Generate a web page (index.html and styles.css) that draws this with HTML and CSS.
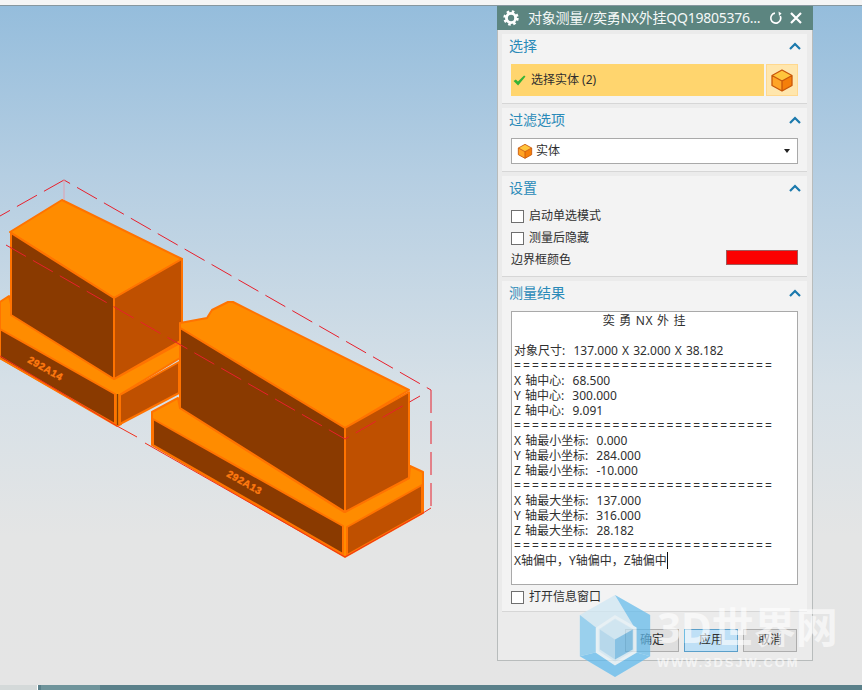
FILE: index.html
```html
<!DOCTYPE html>
<html lang="zh">
<head>
<meta charset="utf-8">
<title>对象测量</title>
<link rel="stylesheet" href="styles.css">
</head>
<body>
<svg class="defs" width="0" height="0" aria-hidden="true">
  <symbol id="cube" viewBox="0 0 24 24">
    <polygon points="12,2 22,7.5 12,13 2,7.5" fill="#ffc53c"/>
    <polygon points="2,7.5 12,13 12,23 2,17.5" fill="#ffa426"/>
    <polygon points="22,7.5 12,13 12,23 22,17.5" fill="#f57f0a"/>
    <path d="M12 2 22 7.5V17.5L12 23 2 17.5V7.5ZM2 7.5 12 13 22 7.5M12 13V23" fill="none" stroke="#c9570a" stroke-width="1.3" stroke-linejoin="round"/>
  </symbol>
  <symbol id="chev" viewBox="0 0 12 8">
    <path d="M1 7 6 2 11 7" fill="none" stroke="#1b79ad" stroke-width="2.2"/>
  </symbol>
</svg>

<div class="topbar"></div>

<main class="stage">
  <svg class="model" viewBox="0 6 862 679" xmlns="http://www.w3.org/2000/svg">
    <g stroke="#ff7300" stroke-width="2" stroke-linejoin="round">
      <!-- left block -->
      <polygon points="0,302 9,296 14,316 114,379 180,343 180,358 121,394 121,424 117,426 0,358" fill="#ff8c00"/>
      <polygon points="0,329 115,394 115,424 0,358" fill="#8a3a00"/>
      <polygon points="120,395 179,362 179,393 120,424" fill="#bf5000"/>
      <line x1="117.500" y1="394" x2="117.500" y2="425" stroke="#8a3a00" stroke-width="1.500"/>
      <polygon points="10,232 62,200 182,259 114,298" fill="#ff8c00"/>
      <polygon points="11,233 114,298 114,379 11,315" fill="#8a3a00"/>
      <polygon points="114,298 182,259 182,340 114,379" fill="#bf5000"/>
      <!-- right block -->
      <polygon points="152,412 178,398 180,408 344,512 409,478 410,466 423,472 423,513 345,557 152,445" fill="#ff8c00"/>
      <polygon points="153,419 343,526 343,554 153,445" fill="#8a3a00"/>
      <polygon points="347,527 422,485 422,513 347,555" fill="#bf5000"/>
      <polygon points="180,323 207,318 212,310 228,302 233,302 409,390 345,428 180,328" fill="#ff8c00"/>
      <polygon points="180,328 345,428 345,512 180,408" fill="#8a3a00"/>
      <polygon points="345,428 409,392 409,478 345,512" fill="#bf5000"/>
    </g>
    <text class="part-label" transform="translate(27 362) rotate(29.5)">292A14</text>
    <text class="part-label" transform="translate(226 476) rotate(29.5)">292A13</text>
    <g fill="none" stroke="#e8202c" stroke-width="1" stroke-dasharray="23 8">
      <path d="M64 180 0 216"/>
      <path d="M64 180 431 390" stroke-dashoffset="16"/>
      <path d="M431 390V508"/>
      <path d="M6 245 345 439 420 396"/>
    </g>
    <path d="M64 180V200" stroke="#e0a0b0" stroke-width="1"/>
    <path d="M0 356 117 426 137 437M145 443 345 557 423 513 431 508" fill="none" stroke="#f0301c" stroke-width="1"/>
  </svg>

  <section class="dialog">
    <header class="dlg-title">
      <svg class="gear" viewBox="0 0 16 16">
        <circle cx="8" cy="8" r="4.6" fill="none" stroke="#fff" stroke-width="2.8"/>
        <circle cx="8" cy="8" r="6.4" fill="none" stroke="#fff" stroke-width="2.6" stroke-dasharray="2.5 2.53"/>
      </svg>
      <span class="dlg-name">对象测量//奕勇NX外挂QQ19805376...</span>
      <svg class="dlg-btn" viewBox="0 0 14 14">
        <path d="M6 2.2A5 5 0 1 0 11.3 5" fill="none" stroke="#fff" stroke-width="1.7"/>
        <path d="M9 .6 12.4 2 10.4 5Z" fill="#fff" transform="rotate(12 10 3)"/>
      </svg>
      <svg class="dlg-btn" viewBox="0 0 14 14">
        <path d="M2 2 12 12M12 2 2 12" fill="none" stroke="#fff" stroke-width="2.2"/>
      </svg>
    </header>

    <div class="dlg-body">
      <div class="panel">
        <div class="panel-head"><span>选择</span><svg class="chev"><use href="#chev"/></svg></div>
        <div class="panel-main">
          <div class="sel-row">
            <div class="sel-field">
              <svg class="tick" viewBox="0 0 14 12"><path d="M.5 6.500 3 4.800 5.300 7.200 12 .5 13.500 1.500 5.500 11.500Z" fill="#36b236"/></svg>
              <span>选择实体 (2)</span>
            </div>
            <div class="sel-btn"><svg class="cube-lg"><use href="#cube"/></svg></div>
          </div>
        </div>
      </div>

      <div class="panel">
        <div class="panel-head"><span>过滤选项</span><svg class="chev"><use href="#chev"/></svg></div>
        <div class="panel-main">
          <div class="combo">
            <svg class="cube-sm"><use href="#cube"/></svg>
            <span class="combo-text">实体</span>
            <span class="combo-arrow"></span>
          </div>
        </div>
      </div>

      <div class="panel">
        <div class="panel-head"><span>设置</span><svg class="chev"><use href="#chev"/></svg></div>
        <div class="panel-main panel-main-rows">
          <label class="check-row"><span class="box"></span>启动单选模式</label>
          <label class="check-row"><span class="box"></span>测量后隐藏</label>
          <div class="color-row"><span>边界框颜色</span><span class="swatch"></span></div>
        </div>
      </div>

      <div class="panel">
        <div class="panel-head"><span>测量结果</span><svg class="chev"><use href="#chev"/></svg></div>
        <div class="panel-main panel-main-result">
          <div class="result">
            <div class="r-title">奕 勇 NX 外 挂</div>
            <div class="r-line">&nbsp;</div>
            <div class="r-line">对象尺寸:&nbsp; 137.000 X 32.000 X 38.182</div>
            <div class="r-line r-sep">=============================</div>
            <div class="r-line">X 轴中心:&nbsp; 68.500</div>
            <div class="r-line">Y 轴中心:&nbsp; 300.000</div>
            <div class="r-line">Z 轴中心:&nbsp; 9.091</div>
            <div class="r-line r-sep">=============================</div>
            <div class="r-line">X 轴最小坐标:&nbsp; 0.000</div>
            <div class="r-line">Y 轴最小坐标:&nbsp; 284.000</div>
            <div class="r-line">Z 轴最小坐标:&nbsp; -10.000</div>
            <div class="r-line r-sep">=============================</div>
            <div class="r-line">X 轴最大坐标:&nbsp; 137.000</div>
            <div class="r-line">Y 轴最大坐标:&nbsp; 316.000</div>
            <div class="r-line">Z 轴最大坐标:&nbsp; 28.182</div>
            <div class="r-line r-sep">=============================</div>
            <div class="r-line r-last"><span class="caret">X轴偏中，Y轴偏中，Z轴偏中</span></div>
          </div>
          <label class="check-row check-row-info"><span class="box"></span>打开信息窗口</label>
        </div>
      </div>

      <div class="dlg-foot">
        <button class="btn">确定</button>
        <button class="btn btn-primary">应用</button>
        <button class="btn">取消</button>
      </div>
    </div>
  </section>

  <div class="watermark">
    <svg class="wm-logo" viewBox="60 45 210 245">
      <polygon points="165,45 270,105 270,228 165,290 60,228 60,105" fill="#cfe7f4"/>
      <polygon points="165,45 270,105 270,228 225,215 225,145" fill="#63bbec"/>
      <polygon points="270,228 165,290 60,228 112,215 165,250 225,215" fill="#5dbaee"/>
      <polygon points="60,228 60,105 112,145 112,215" fill="#7cc6ee"/>
      <polygon points="165,110 225,145 225,215 165,250 112,215 112,145" fill="none" stroke="#e6f2f8" stroke-width="9"/>
      <polygon points="165,118 218,148 165,178 120,148" fill="#c6e3f3"/>
      <polygon points="120,148 165,178 165,238 120,208" fill="#a4d2ec"/>
      <polygon points="218,148 165,178 165,238 218,208" fill="#62b2e0"/>
    </svg>
    <div class="wm-text">
      <div class="wm-main">3D世界网</div>
      <div class="wm-sub">WWW.3DSJW.COM</div>
    </div>
  </div>
</main>

<footer class="taskbar">
  <span class="task task-a"></span>
  <span class="task task-b"></span>
</footer>
</body>
</html>
```

FILE: styles.css
```css
* { box-sizing: border-box; }

html, body {
  margin: 0;
  height: 100%;
  overflow: hidden;
}

body {
  display: flex;
  flex-direction: column;
  width: 862px;
  height: 690px;
  font: 12px/1.2 "Noto Sans", "Noto Sans CJK SC", sans-serif;
  color: #2f2f2f;
  background: #e5e5e5;
}

.defs { position: absolute; }

.topbar {
  flex: 0 0 6px;
  background: #f5f5f5;
  border-bottom: 1px solid #87979f;
}

.stage {
  position: relative;
  flex: 1;
  background: linear-gradient(#95bddc 0, #b5cee2 170px, #d6e0e7 380px, #e4e5e5 530px, #e5e5e5 100%);
}

.model {
  position: absolute;
  inset: 0;
  width: 100%;
  height: 100%;
}

.part-label {
  font: 700 10px "Liberation Sans", sans-serif;
  fill: #ff7a10;
  stroke: #ff7a10;
  stroke-width: .4px;
  letter-spacing: .6px;
}

.dialog {
  position: absolute;
  left: 497px;
  top: 0;
  width: 316px;
  height: 655px;
  display: flex;
  flex-direction: column;
  background: #ebebeb;
  border: 1px solid #b8bcbc;
  border-top: 0;
}

.dlg-title {
  display: flex;
  align-items: center;
  flex: 0 0 24px;
  margin: 0 -1px;
  padding: 0 10px 0 6px;
  background: #5c8580;
  color: #f4f8f7;
  font-size: 14px;
}

.gear { width: 16px; height: 16px; flex: none; }

.dlg-name {
  flex: 1;
  margin-left: 9px;
  letter-spacing: -.25px;
  white-space: nowrap;
}

.dlg-btn { width: 14px; height: 14px; margin-left: 6px; flex: none; }

.dlg-body {
  display: flex;
  flex-direction: column;
  gap: 4px;
  padding: 4px 5px 0 4px;
  flex: 1;
}

.panel {
  background: #f3f3f3;
  border-bottom: 1px solid #d6d6d6;
}

.panel-head {
  display: flex;
  align-items: center;
  justify-content: space-between;
  height: 24px;
  padding: 0 6px 0 7px;
  color: #2a8ab8;
  font-size: 14px;
}

.chev { width: 12px; height: 8px; }

.panel-main { padding: 6px 9px 7px; }
.panel-main-rows { padding: 5px 9px 5px; }
.panel-main-result { padding: 6px 9px 2px; }

.sel-row { display: flex; gap: 2px; height: 32px; }

.sel-field {
  display: flex;
  align-items: center;
  flex: 1;
  gap: 5px;
  padding-left: 2px;
  background: #ffd56e;
}

.tick { width: 13px; height: 11px; }

.sel-btn {
  display: flex;
  align-items: center;
  justify-content: center;
  width: 32px;
  background: #ffe6ad;
  border: 1px solid #ffd88e;
}

.cube-lg { width: 24px; height: 24px; }
.cube-sm { width: 16px; height: 16px; }

.combo {
  display: flex;
  align-items: center;
  height: 26px;
  padding: 0 7px 0 5px;
  background: #fff;
  border: 1px solid #a9a9a9;
}

.combo-text { flex: 1; margin-left: 3px; }

.combo-arrow {
  width: 0;
  height: 0;
  border: 3.5px solid transparent;
  border-top: 4px solid #222;
  border-bottom: 0;
}

.check-row {
  display: flex;
  align-items: center;
  gap: 5px;
  height: 22px;
}

.check-row-info { height: 24px; }

.box {
  width: 13px;
  height: 13px;
  background: #fff;
  border: 1px solid #6f6f6f;
}

.color-row {
  display: flex;
  align-items: center;
  justify-content: space-between;
  height: 22px;
}

.swatch {
  width: 72px;
  height: 15px;
  margin-bottom: 6px;
  background: #fb0000;
  border: 1px solid #a05a5a;
}

.result {
  height: 274px;
  padding: 1px 2px;
  background: #fff;
  border: 1px solid #a9a9a9;
}

.r-title {
  height: 15px;
  padding-right: 20px;
  line-height: 15px;
  text-align: center;
  letter-spacing: .7px;
}

.r-line {
  height: 15px;
  line-height: 15px;
  word-spacing: 1px;
  white-space: nowrap;
}

.r-sep { letter-spacing: 2.1px; }

.r-last { font-family: "Noto Sans", "Noto Sans CJK TC", sans-serif; }

.caret { border-right: 1px solid #111; }

.dlg-foot {
  display: flex;
  justify-content: flex-end;
  gap: 5px;
  padding: 13px 10px 0 0;
}

.btn {
  width: 54px;
  height: 23px;
  padding: 0;
  font: inherit;
  color: #2f2f2f;
  background: #dedede;
  border: 1px solid #adadad;
}

.btn-primary {
  background: #bfe0f6;
  border-color: #5b9fc9;
}

.watermark {
  position: absolute;
  left: 579px;
  top: 589px;
  display: flex;
  gap: 6px;
  pointer-events: none;
}

.wm-logo { width: 72px; height: 82px; flex: none; opacity: .72; }

.wm-text { color: #fff; opacity: .6; padding-top: 9px; }

.wm-main {
  font: 700 42px/46px "Noto Sans", "Noto Sans CJK SC", sans-serif;
  white-space: nowrap;
}

.wm-sub {
  font: 700 13px/14px "Liberation Sans", sans-serif;
  letter-spacing: 1.9px;
  margin-top: 6px;
  white-space: nowrap;
}

.taskbar {
  display: flex;
  gap: 3px;
  flex: 0 0 5px;
  background: #5a808a;
}

.task { height: 5px; }
.task-a { width: 38px; background: #d4d9d9; border-right: 1px solid #fff; }
.task-b { width: 59px; background: #6f949b; }
```
